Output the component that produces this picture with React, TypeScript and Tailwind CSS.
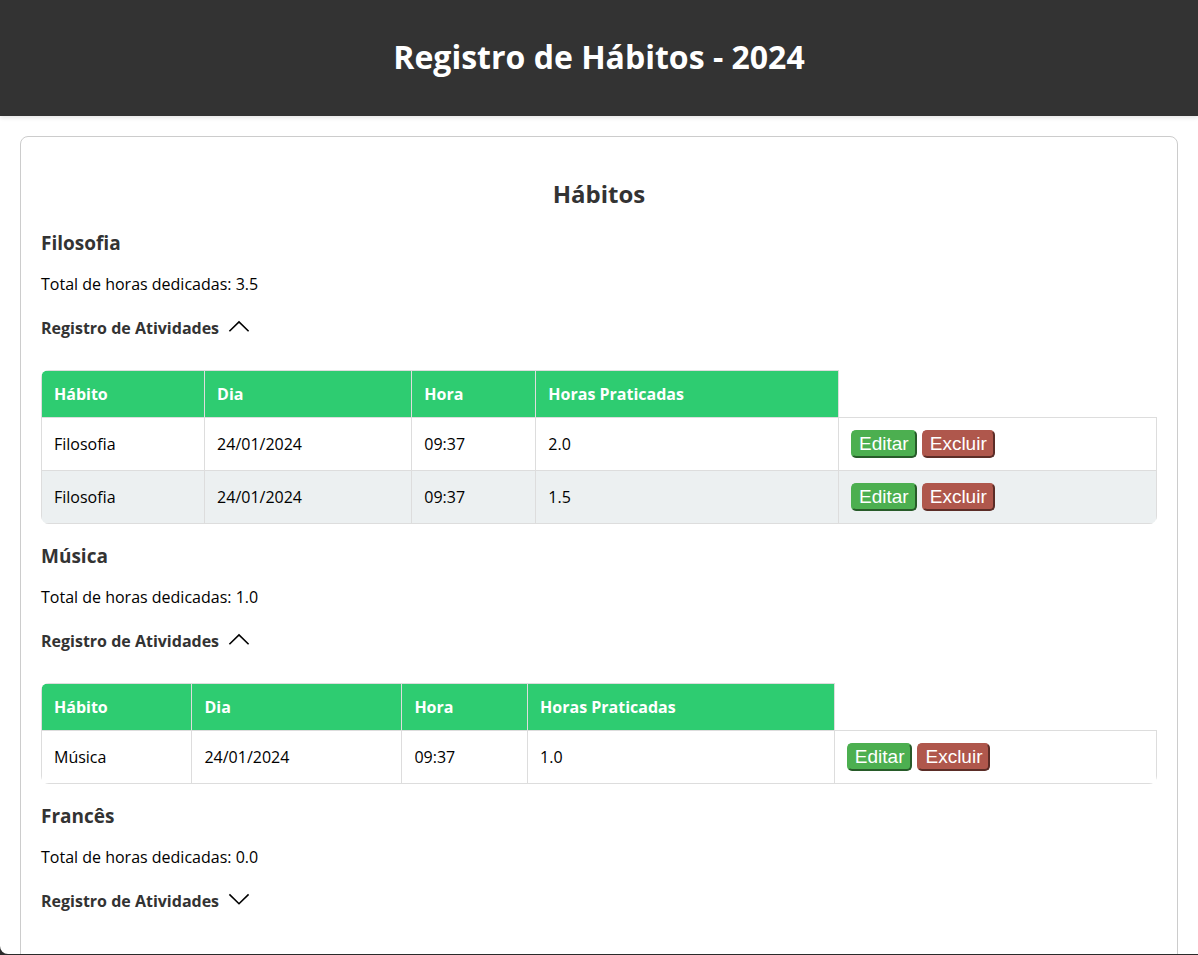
import { useId, useState } from "react";

type Entry = { day: string; time: string; hours: string };
type Habit = { name: string; total: string; entries: Entry[] };

const habits: Habit[] = [
  {
    name: "Filosofia",
    total: "3.5",
    entries: [
      { day: "24/01/2024", time: "09:37", hours: "2.0" },
      { day: "24/01/2024", time: "09:37", hours: "1.5" },
    ],
  },
  {
    name: "Música",
    total: "1.0",
    entries: [{ day: "24/01/2024", time: "09:37", hours: "1.0" }],
  },
  { name: "Francês", total: "0.0", entries: [] },
];

const columns = ["Hábito", "Dia", "Hora", "Horas Praticadas"];

function Chevron({ open }: { open: boolean }) {
  return (
    <svg
      width="20"
      height="14"
      viewBox="0 0 20 14"
      fill="none"
      stroke="#000"
      strokeWidth="1.6"
      className="overflow-visible"
      aria-hidden="true"
    >
      <path d={open ? "M0.4 10.2 L10 0.9 L19.6 10.2" : "M0.4 0.4 L10 9.7 L19.6 0.4"} />
    </svg>
  );
}

function EntryTable({ habit }: { habit: Habit }) {
  return (
    <table className="mt-[31px] w-full border-collapse overflow-hidden rounded-lg">
      <thead>
        <tr>
          {columns.map((column) => (
            <th
              key={column}
              scope="col"
              className="border border-[#ddd] bg-[#2ecc71] p-3 text-left font-bold text-white"
            >
              {column}
            </th>
          ))}
        </tr>
      </thead>
      <tbody>
        {habit.entries.map((entry, index) => (
          <tr key={index} className="even:bg-[#ecf0f1]">
            <td className="border border-[#ddd] p-3">{habit.name}</td>
            <td className="border border-[#ddd] p-3">{entry.day}</td>
            <td className="border border-[#ddd] p-3">{entry.time}</td>
            <td className="border border-[#ddd] p-3">{entry.hours}</td>
            <td className="border border-[#ddd] p-3">
              <div className="flex gap-[5px] font-['Liberation_Sans',Arial,sans-serif] text-[19px] leading-[22px] text-white">
                <button
                  type="button"
                  className="rounded-[5px] border-2 border-[#4caf50] bg-[#4caf50] px-1.5 py-px [border-style:outset]"
                >
                  Editar
                </button>
                <button
                  type="button"
                  className="rounded-[5px] border-2 border-[#af574c] bg-[#af574c] px-1.5 py-px [border-style:outset]"
                >
                  Excluir
                </button>
              </div>
            </td>
          </tr>
        ))}
      </tbody>
    </table>
  );
}

function HabitSection({ habit }: { habit: Habit }) {
  const [open, setOpen] = useState(habit.entries.length > 0);
  const panelId = useId();

  return (
    <section className="mt-[19px]">
      <h3 className="text-[19px] leading-[26px] font-bold text-[#333]">{habit.name}</h3>
      <p className="mt-[17px] leading-[22px]">Total de horas dedicadas: {habit.total}</p>
      <h4 className="mt-[22px] font-bold text-[#333]">
        <button
          type="button"
          aria-expanded={open}
          aria-controls={panelId}
          onClick={() => setOpen(!open)}
          className="flex items-center gap-2.5 leading-[22px]"
        >
          Registro de Atividades
          <Chevron open={open} />
        </button>
      </h4>
      <div id={panelId}>
        {open && habit.entries.length > 0 && <EntryTable habit={habit} />}
      </div>
    </section>
  );
}

export default function App() {
  return (
    <div className="h-screen bg-[#2b2b2b] pb-px font-['Open_Sans','Noto_Sans',sans-serif] text-base leading-[22px] text-black">
      <div className="h-full overflow-y-auto rounded-bl-lg bg-white [scrollbar-width:none]">
        <header className="bg-[#333] px-5 pt-[35px] pb-[37px] text-center text-white shadow-[0_2px_4px_rgba(0,0,0,0.1)]">
          <h1 className="text-[32px] leading-[44px] font-bold">Registro de Hábitos - 2024</h1>
        </header>
        <main className="m-5 rounded-lg border border-[#ccc] px-5 pt-10 pb-20">
          <h2 className="text-center text-2xl leading-[34px] font-bold text-[#333]">Hábitos</h2>
          {habits.map((habit) => (
            <HabitSection key={habit.name} habit={habit} />
          ))}
        </main>
      </div>
    </div>
  );
}
